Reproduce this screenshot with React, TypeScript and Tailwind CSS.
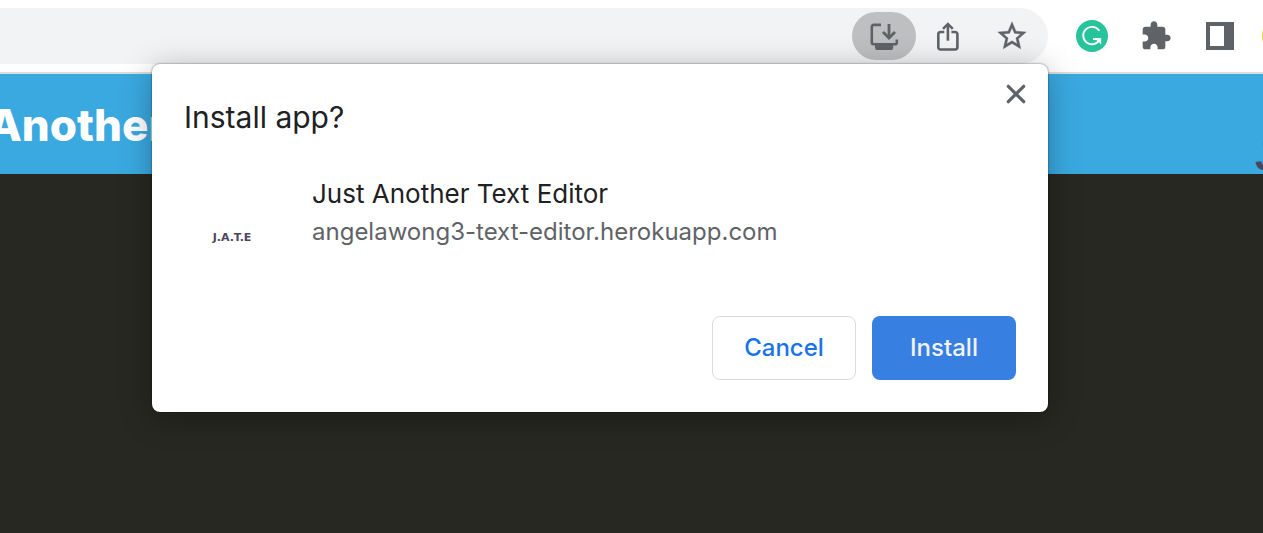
import React from "react";

function ToolbarButton({ label, active, children }: { label: string; active?: boolean; children: React.ReactNode }) {
  return (
    <button
      type="button"
      aria-label={label}
      className={`flex h-12 w-16 shrink-0 items-center justify-center rounded-full text-[#5f6368] ${active ? "bg-[#bdbfc0]" : ""}`}
    >
      {children}
    </button>
  );
}

function InstallIcon() {
  return (
    <svg width="32" height="32" viewBox="0 0 32 32" fill="none" stroke="currentColor" strokeWidth="2.6">
      <path d="M13 4.9H5.8a2 2 0 0 0-2 2v15.4a2 2 0 0 0 2 2h21.2a1.8 1.8 0 0 0 1.8-1.8v-3" />
      <path d="M21 4v14" strokeWidth="2.8" />
      <path d="m15 12 6 6 6-6" strokeWidth="2.9" />
      <path d="M7 24.5h18.2v3.2l-1 2.3H8l-1-2.3z" fill="currentColor" stroke="none" />
    </svg>
  );
}

function ShareIcon() {
  return (
    <svg width="32" height="32" viewBox="0 0 32 32" fill="none" stroke="currentColor" strokeWidth="2.6">
      <path d="M12.3 12H8.6A2.3 2.3 0 0 0 6.3 14.3v12.9a2.3 2.3 0 0 0 2.3 2.3h14.5a2.3 2.3 0 0 0 2.3-2.3V14.3a2.3 2.3 0 0 0-2.3-2.3h-3.7" />
      <path d="M15.9 4.5v16.2" />
      <path d="m11 8.9 4.9-4.8 4.9 4.8" />
    </svg>
  );
}

function StarIcon() {
  return (
    <svg width="34" height="34" viewBox="0 0 24 24" fill="currentColor" stroke="currentColor" strokeWidth="0.3">
      <path d="M22 9.24l-7.19-.62L12 2 9.19 8.63 2 9.24l5.46 4.73L5.82 21 12 17.27 18.18 21l-1.63-7.03L22 9.24zM12 15.4l-3.76 2.27 1-4.28-3.32-2.88 4.38-.38L12 6.1l1.71 4.04 4.38.38-3.32 2.88 1 4.28L12 15.4z" />
    </svg>
  );
}

function GrammarIcon() {
  return (
    <svg width="32" height="32" viewBox="0 0 32 32" fill="none" stroke="#fff" strokeWidth="1.9">
      <circle cx="16" cy="16" r="16" fill="#27c39b" stroke="none" />
      <path d="M22.8 10.2A8.7 8.7 0 1 0 23.4 20" strokeLinecap="round" />
      <path d="M17 19.1h7.4" />
      <path d="M18.4 18.2h6.8v6.6l-2.2-2.6z" fill="#fff" stroke="none" />
    </svg>
  );
}

function PuzzleIcon() {
  return (
    <svg width="32" height="32" viewBox="0 0 24 24" fill="currentColor">
      <path d="M20.5 11H19V7c0-1.1-.9-2-2-2h-4V3.5C13 2.12 11.88 1 10.5 1S8 2.12 8 3.5V5H4c-1.1 0-1.99.9-1.99 2v3.8H3.5c1.49 0 2.7 1.21 2.7 2.7s-1.21 2.7-2.7 2.7H2V20c0 1.1.9 2 2 2h3.8v-1.5c0-1.49 1.21-2.7 2.7-2.7 1.49 0 2.7 1.21 2.7 2.7V22H17c1.1 0 2-.9 2-2v-4h1.5c1.38 0 2.5-1.12 2.5-2.5S21.88 11 20.5 11z" />
    </svg>
  );
}

function SidePanelIcon() {
  return (
    <svg width="28" height="28" viewBox="0 0 28 28" fill="currentColor">
      <path fillRule="evenodd" d="M0 0h28v28H0zM4 4v20h14V4z" />
    </svg>
  );
}

function Toolbar() {
  return (
    <div className="flex h-[74px] items-start border-b-2 border-[#dadcde] bg-white pt-2">
      <div className="flex h-14 min-w-0 flex-1 items-center rounded-r-full bg-[#f1f3f4] pr-1">
        <input aria-label="Address" className="h-full min-w-0 flex-1 bg-transparent outline-none" />
        <ToolbarButton label="Install app" active>
          <InstallIcon />
        </ToolbarButton>
        <ToolbarButton label="Share">
          <ShareIcon />
        </ToolbarButton>
        <ToolbarButton label="Bookmark">
          <StarIcon />
        </ToolbarButton>
      </div>
      <div className="flex h-14 w-[215px] items-center overflow-hidden pl-3">
        <ToolbarButton label="Writing assistant">
          <GrammarIcon />
        </ToolbarButton>
        <ToolbarButton label="Extensions">
          <PuzzleIcon />
        </ToolbarButton>
        <ToolbarButton label="Side panel">
          <SidePanelIcon />
        </ToolbarButton>
        <button type="button" aria-label="Profile" className="ml-2.5 size-10 shrink-0 rounded-full bg-[#f2d530]" />
      </div>
    </div>
  );
}

function InstallDialog() {
  return (
    <section
      role="dialog"
      aria-labelledby="install-title"
      className="absolute top-16 right-[215px] left-[152px] rounded-lg bg-white p-8 shadow-[0_0_2px_rgba(0,0,0,0.6),0_6px_32px_rgba(0,0,0,0.3)]"
    >
      <div className="flex items-start justify-between">
        <h2 id="install-title" className="pt-1 text-[30px] leading-[34px] text-[#202124]">
          Install app?
        </h2>
        <button type="button" aria-label="Close" className="-mt-[18px] -mr-4 flex size-8 items-center justify-center">
          <svg width="20" height="20" viewBox="0 0 20 20" fill="none" stroke="#5f6368" strokeWidth="3.2" strokeLinecap="round">
            <path d="m2.3 2.3 15.4 15.4M17.7 2.3 2.3 17.7" />
          </svg>
        </button>
      </div>
      <div className="mt-10 flex gap-8">
        <div className="flex h-[98px] w-24 shrink-0 items-end justify-center pb-7 font-['DejaVu_Sans'] text-[11px] leading-3 font-bold text-[#4b4660]">
          J.A.T.E
        </div>
        <div className="min-w-0">
          <p className="text-[26px] leading-10 text-[#202124]">Just Another Text Editor</p>
          <p className="text-[24px] leading-9 text-[#5f6368]">angelawong3-text-editor.herokuapp.com</p>
        </div>
      </div>
      <div className="mt-11 flex justify-end gap-4 text-[24px] font-medium">
        <button type="button" className="h-16 w-36 rounded-lg border border-[#dadce0] text-[#1a73e8]">
          Cancel
        </button>
        <button type="button" className="h-16 w-36 rounded-lg bg-[#377fe1] text-[#f1f3f4]">
          Install
        </button>
      </div>
    </section>
  );
}

export default function App() {
  return (
    <div className="relative flex min-h-screen flex-col overflow-hidden bg-[#272822] font-['Inter',sans-serif]">
      <Toolbar />
      <header className="flex h-[100px] items-center justify-between overflow-hidden bg-[#3aa9e0]">
        <h1 className="-ml-3 pt-0.5 text-[44px] leading-none font-extrabold text-white">Another</h1>
        <div className="w-2 shrink-0 overflow-hidden pt-16 font-['Liberation_Sans'] text-[40px] leading-9 font-bold text-[#4b4660]">
          J.A.T.E
        </div>
      </header>
      <main className="flex-1" />
      <InstallDialog />
    </div>
  );
}
